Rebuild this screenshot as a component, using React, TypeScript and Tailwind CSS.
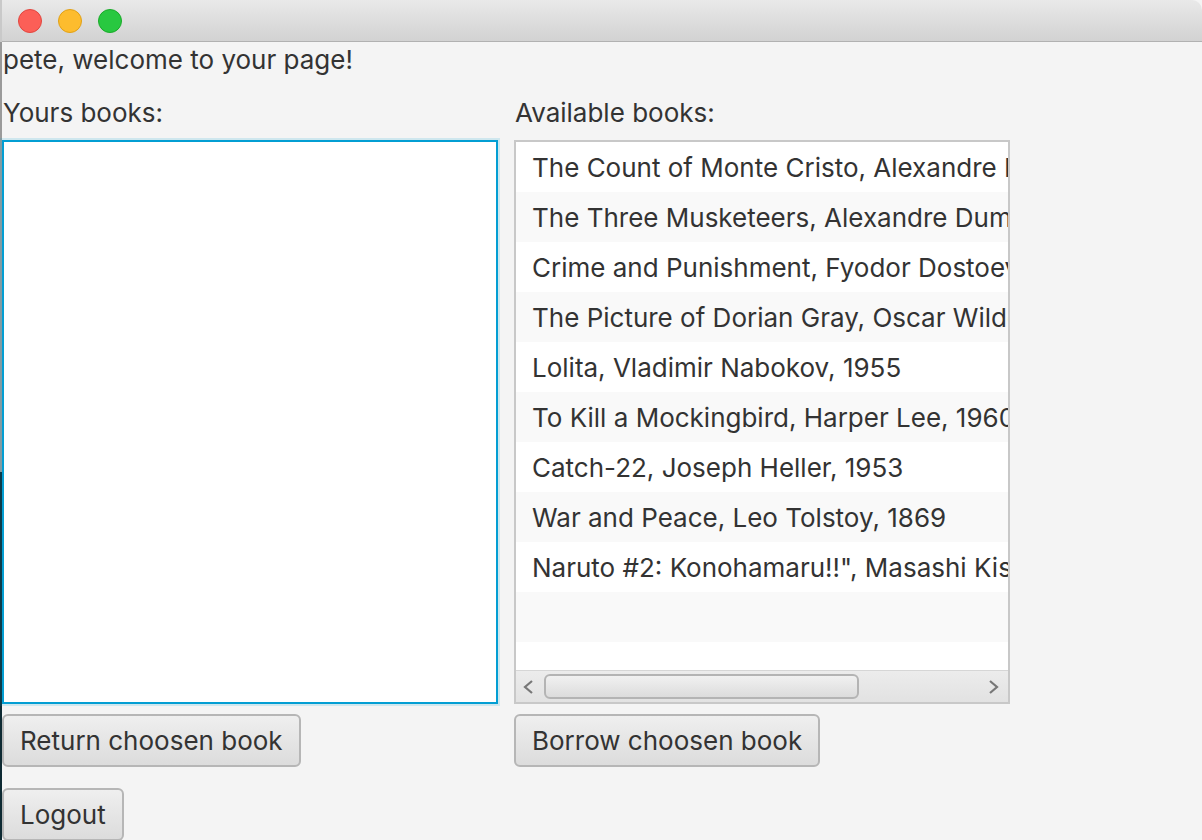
import React from "react";

const books = [
  "The Count of Monte Cristo, Alexandre Dumas, 1844",
  "The Three Musketeers, Alexandre Dumas, 1844",
  "Crime and Punishment, Fyodor Dostoevsky, 1866",
  "The Picture of Dorian Gray, Oscar Wilde, 1890",
  "Lolita, Vladimir Nabokov, 1955",
  "To Kill a Mockingbird, Harper Lee, 1960",
  "Catch-22, Joseph Heller, 1953",
  "War and Peace, Leo Tolstoy, 1869",
  'Naruto #2: Konohamaru!!", Masashi Kishimoto, 2003',
];

function Btn({ children }: { children: React.ReactNode }) {
  return (
    <button className="h-[53px] px-[16px] rounded-[6px] border-2 border-[#b6b6b6] bg-gradient-to-b from-[#efefef] to-[#dcdcdc] text-[#333333] text-[26px] leading-none whitespace-nowrap">
      {children}
    </button>
  );
}

export default function App() {
  const rows = [...books, "", ""];
  return (
    <div
      className="w-[1202px] h-[840px] overflow-hidden flex bg-[#f4f4f4]"
      style={{ fontFamily: "Inter, 'Helvetica Neue', 'Liberation Sans', sans-serif" }}
    >
      <div className="w-[2px] flex flex-col shrink-0">
        <div className="h-[42px] bg-[#c9c9c9]" />
        <div className="h-[430px] bg-[#9a9a9a]" />
        <div className="flex-1 bg-[#0e2a33]" />
      </div>
      <div className="flex-1 flex flex-col min-w-0">
        <div className="h-[42px] shrink-0 bg-gradient-to-b from-[#e9e9e9] to-[#d2d2d2] border-b border-[#b1b1b1] flex items-center gap-[16px] pl-[16px] rounded-tr-[10px]">
          <span className="w-[24px] h-[24px] rounded-full bg-[#fc5f57] border border-[#e2463f]" />
          <span className="w-[24px] h-[24px] rounded-full bg-[#fdbc2e] border border-[#e1a116]" />
          <span className="w-[24px] h-[24px] rounded-full bg-[#28c840] border border-[#1aab29]" />
        </div>
        <div className="text-[#333333] text-[26px] leading-[30px] pt-[3px] pl-[1px] whitespace-nowrap">pete, welcome to your page!</div>
        <div className="flex gap-[16px] mt-[19px]">
          <div className="w-[496px] flex flex-col">
            <div className="text-[#333333] text-[26px] leading-[30px] pt-[4px] pl-[1px] h-[46px] whitespace-nowrap">Yours books:</div>
            <div className="h-[564px] border-2 border-[#039ed3] bg-white shadow-[0_0_0_2px_rgba(3,158,211,0.15)]" />
            <div className="mt-[10px]">
              <Btn>Return choosen book</Btn>
            </div>
          </div>
          <div className="w-[496px] flex flex-col">
            <div className="text-[#333333] text-[26px] leading-[30px] pt-[4px] pl-[1px] h-[46px] whitespace-nowrap">Available books:</div>
            <div className="h-[564px] border-2 border-[#c8c8c8] bg-white flex flex-col overflow-hidden">
              <div className="flex-1 overflow-hidden">
                {rows.map((b, i) => (
                  <div
                    key={i}
                    className={`h-[50px] flex items-center pl-[16px] whitespace-nowrap overflow-hidden text-[#333333] text-[26px] ${i % 2 === 1 ? "bg-[#f9f9f9]" : "bg-white"}`}
                  >
                    {b}
                  </div>
                ))}
              </div>
              <div className="h-[32px] shrink-0 border-t border-[#d6d6d6] bg-gradient-to-b from-[#ececec] to-[#e2e2e2] flex items-center">
                <svg width="28" height="32" viewBox="0 0 28 32" className="shrink-0">
                  <path d="M16 10 L9 16 L16 22" fill="none" stroke="#777" strokeWidth="2.2" />
                </svg>
                <div className="w-[315px] h-[25px] rounded-[6px] border-2 border-[#b4b4b4] bg-gradient-to-b from-[#f1f1f1] to-[#dcdcdc]" />
                <div className="flex-1" />
                <svg width="28" height="32" viewBox="0 0 28 32" className="shrink-0">
                  <path d="M10 10 L17 16 L10 22" fill="none" stroke="#777" strokeWidth="2.2" />
                </svg>
              </div>
            </div>
            <div className="mt-[10px]">
              <Btn>Borrow choosen book</Btn>
            </div>
          </div>
        </div>
        <div className="mt-[21px]">
          <Btn>Logout</Btn>
        </div>
      </div>
    </div>
  );
}
